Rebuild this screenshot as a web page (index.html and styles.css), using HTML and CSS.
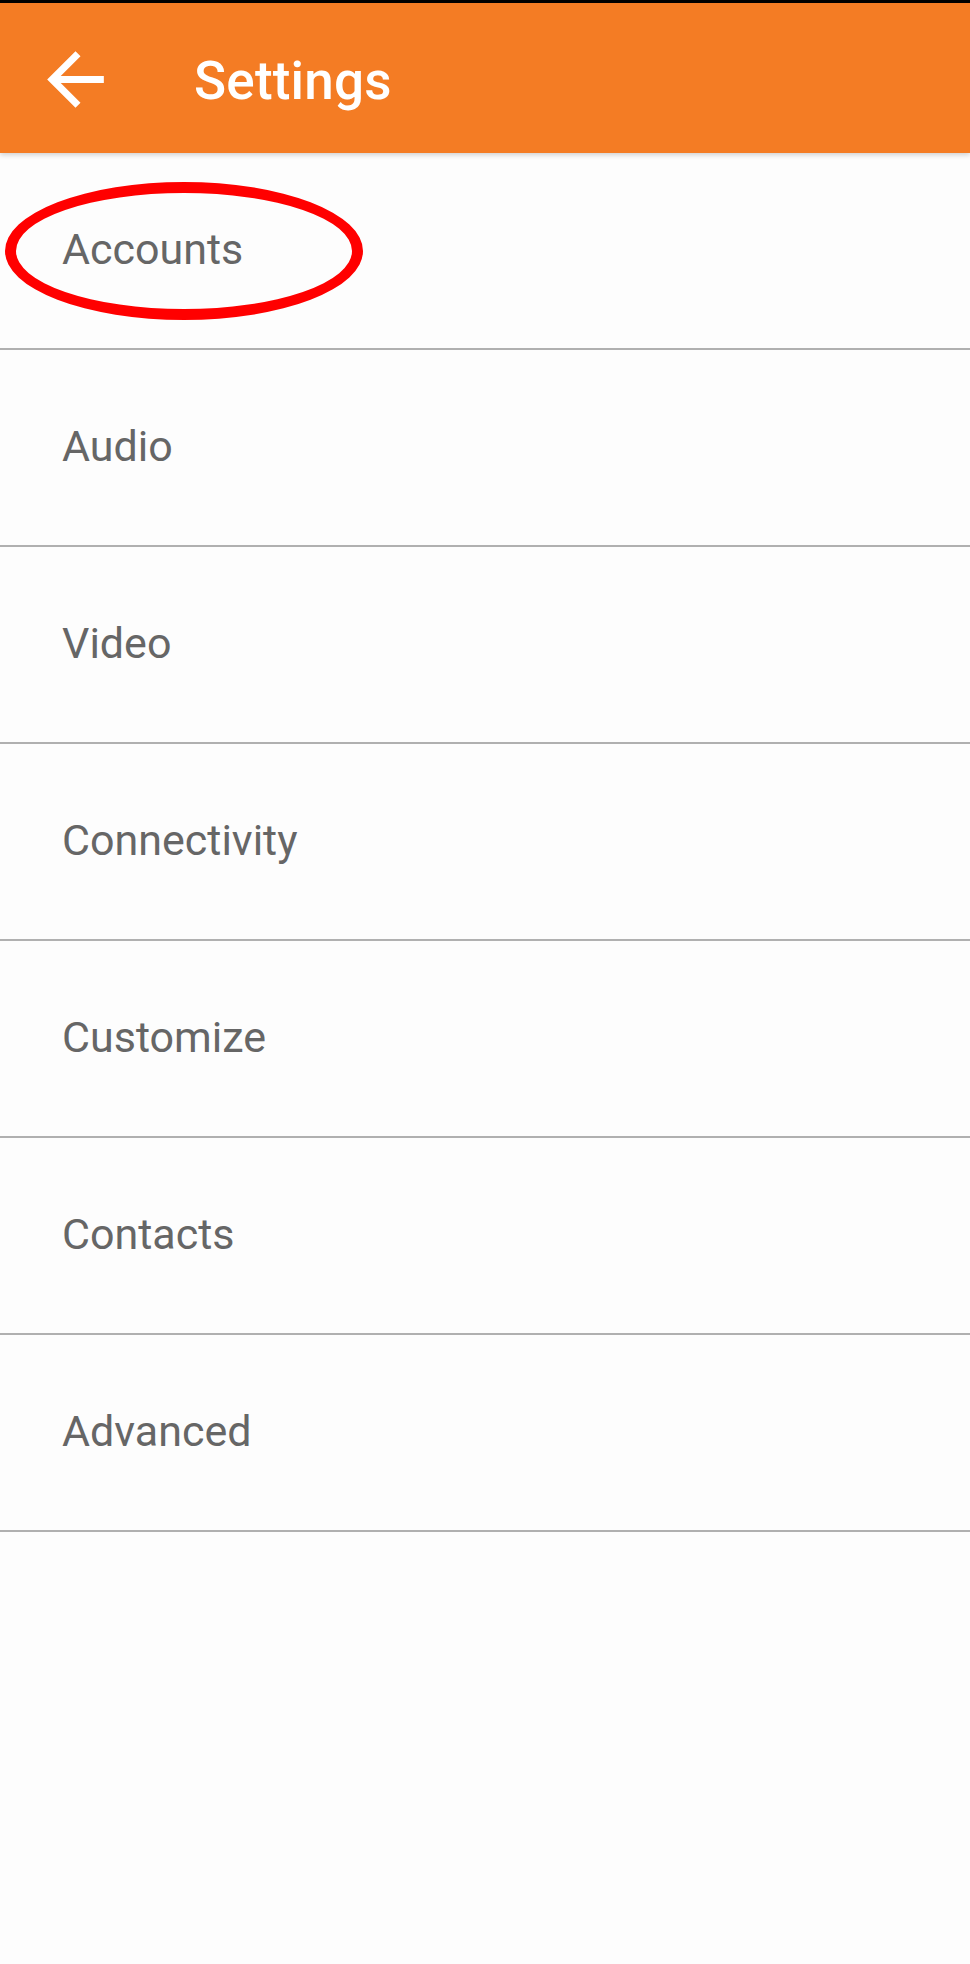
FILE: index.html
```html
<!DOCTYPE html>
<html lang="en">
<head>
    <meta charset="UTF-8">
    <meta name="viewport" content="width=device-width, initial-scale=1.0">
    <title>Settings</title>
    <link rel="stylesheet" href="styles.css">
</head>
<body>

    <div class="status"></div>

    <header class="toolbar">
        <button class="back" aria-label="Back">
            <svg viewBox="0 0 24 24" width="85" height="85">
                <path fill="#fff" d="M20 11H7.83l5.59-5.59L12 4l-8 8 8 8 1.41-1.41L7.83 13H20v-2z"/>
            </svg>
        </button>
        <h1>Settings</h1>
    </header>

    <ul class="menu">
        <li class="item highlighted">
            Accounts
            <span class="circle"></span>
        </li>
        <li class="item">Audio</li>
        <li class="item">Video</li>
        <li class="item">Connectivity</li>
        <li class="item">Customize</li>
        <li class="item">Contacts</li>
        <li class="item">Advanced</li>
    </ul>

</body>
</html>
```

FILE: styles.css
```css
body {
    margin: 0;
    font-family: Roboto, "Noto Sans", Arial, sans-serif;
    background-color: #fdfdfd;
}
.status {
    height: 3px;
    background: #000;
}
.toolbar {
    position: relative;
    z-index: 1;
    display: flex;
    align-items: center;
    height: 150px;
    background-color: #f47c24;
    box-shadow: 0px 2px 5px rgba(0, 0, 0, 0.18);
}
.back {
    display: flex;
    background: none;
    border: none;
    padding: 0;
    margin-left: 33px;
    margin-top: 2px;
    cursor: pointer;
}
.toolbar h1 {
    margin: 5px 0 0 76px;
    color: #fff;
    font-size: 53px;
    font-weight: 500;
    letter-spacing: 0.2px;
}
.menu {
    list-style: none;
    margin: 0;
    padding: 0;
}
.item {
    position: relative;
    display: flex;
    align-items: center;
    height: 191px;
    padding: 0 0 4px 62px;
    border-bottom: 2px solid #b0b0b0;
    color: #666;
    font-size: 43px;
}
.circle {
    position: absolute;
    left: 5px;
    top: 29px;
    width: 336px;
    height: 116px;
    border: 11px solid #f00;
    border-radius: 50%;
}
```
